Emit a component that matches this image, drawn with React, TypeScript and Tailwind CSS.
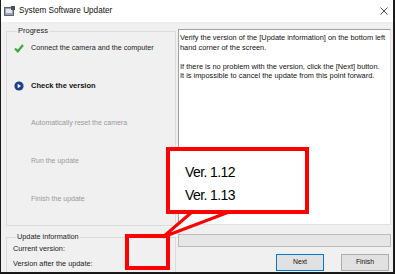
import React from 'react';

type StepState = 'done' | 'current' | 'todo';

const steps: { label: string; state: StepState }[] = [
    { label: 'Connect the camera and the computer', state: 'done' },
    { label: 'Check the version', state: 'current' },
    { label: 'Automatically reset the camera', state: 'todo' },
    { label: 'Run the update', state: 'todo' },
    { label: 'Finish the update', state: 'todo' },
];

const StepIcon: React.FC<{ state: StepState }> = ({ state }) => {
    if (state === 'done') {
        return (
            <svg width="10" height="10" viewBox="0 0 10 10">
                <path d="M1 5.5 L3.8 8.3 L9 2" fill="none" stroke="#3aa83a" strokeWidth="2.2" />
            </svg>
        );
    }
    if (state === 'current') {
        return (
            <svg width="10" height="10" viewBox="0 0 10 10">
                <circle cx="5" cy="5" r="4.6" fill="#1f3f8c" />
                <path d="M3.7 2.8 L7 5 L3.7 7.2 Z" fill="#fff" />
            </svg>
        );
    }
    return <span className="w-[10px]" />;
};

const App: React.FC = () => {
    return (
        <div className="relative w-[395px] h-[275px] bg-white font-['Liberation_Sans',Arial,sans-serif]">
            <div className="flex flex-col w-[395px] h-[274px] border-l border-r-2 border-b-2 border-[#1a1a1a]">
                {/* title bar */}
                <div className="flex items-center h-[22px] bg-white pl-[3px] pr-[5px]">
                    <svg width="11" height="11" viewBox="0 0 11 11" className="mr-[4px]">
                        <rect x="0.5" y="1.5" width="9" height="8" fill="#9aa3ad" stroke="#5a636b" />
                        <rect x="2" y="3" width="6" height="4" fill="#dfe5ea" />
                        <rect x="7" y="0" width="4" height="4" fill="#46505a" />
                    </svg>
                    <span className="text-[8.2px] text-[#111]">System Software Updater</span>
                    <svg width="8" height="8" viewBox="0 0 8 8" className="ml-auto">
                        <path d="M0.5 0.5 L7.5 7.5 M7.5 0.5 L0.5 7.5" stroke="#333" strokeWidth="0.9" />
                    </svg>
                </div>

                {/* body */}
                <div className="flex flex-1 bg-[#f0f0f0] overflow-hidden">
                    {/* left column */}
                    <div className="flex flex-col w-[170px] ml-[5px] pt-[4px]">
                        <fieldset className="h-[200px] shrink-0 border border-[#dcdcdc] px-[7px]">
                            <legend className="ml-[3px] px-[1px] text-[7.5px] leading-[10px] text-[#222]">Progress</legend>
                            <div className="flex flex-col -mt-[7px]">
                                {steps.map((s) => (
                                    <div key={s.label} className="flex items-center gap-[7px] h-[37.8px]">
                                        <StepIcon state={s.state} />
                                        <span
                                            className={
                                                s.state === 'current'
                                                    ? 'text-[7.5px] font-bold text-[#111]'
                                                    : s.state === 'done'
                                                    ? 'text-[7.2px] text-[#222]'
                                                    : 'text-[7px] text-[#9a9a9a]'
                                            }
                                        >
                                            {s.label}
                                        </span>
                                    </div>
                                ))}
                            </div>
                        </fieldset>
                        <fieldset className="mt-[6px] h-[60px] shrink-0 border border-[#dcdcdc] px-[6px]">
                            <legend className="ml-[3px] px-[1px] text-[7.3px] leading-[10px] text-[#222]">Update information</legend>
                            <div className="flex flex-col text-[7.3px] text-[#222] leading-[15px] -mt-[1px]">
                                <span>Current version:</span>
                                <span>Version after the update:</span>
                            </div>
                        </fieldset>
                    </div>

                    {/* right column */}
                    <div className="flex flex-col w-[213px] ml-[2px] pt-[7px]">
                        <div className="h-[196px] shrink-0 bg-white border border-[#a0a0a0] border-b-[#e0e0e0] border-r-[#e0e0e0] px-[1px] pt-[3px] text-[7.4px] leading-[9.5px] text-[#111]">
                            <p>Verify the version of the [Update information] on the bottom left hand corner of the screen.</p>
                            <p className="mt-[9.5px]">If there is no problem with the version, click the [Next] button.</p>
                            <p>It is impossible to cancel the update from this point forward.</p>
                        </div>
                        <div className="mt-[9px] h-[13px] shrink-0 bg-[#e6e6e6] border border-[#bcbcbc]" />
                        <div className="flex justify-end gap-[17px] mt-[7px] pr-[2px]">
                            <button className="w-[48px] h-[17px] bg-[#e1e1e1] border border-[#0078d7] text-[6.8px] text-[#111]">Next</button>
                            <button className="w-[48px] h-[17px] bg-[#e1e1e1] border border-[#adadad] text-[6.8px] text-[#111]">Finish</button>
                        </div>
                    </div>
                </div>
            </div>

            {/* callout overlay */}
            <svg width="395" height="275" className="absolute left-0 top-0 pointer-events-none">
                <polygon points="192,212 163,237 229,212" fill="#fff" stroke="#ff0000" strokeWidth="3" strokeLinejoin="miter" />
            </svg>
            <div className="absolute left-[166px] top-[147px] w-[143px] h-[67px] bg-white border-4 border-[#ff0000] pl-[15px] pt-[10px] flex flex-col text-[14px] leading-[23px] tracking-[-0.6px] text-black">
                <span>Ver. 1.12</span>
                <span>Ver. 1.13</span>
            </div>
            <div className="absolute left-[125px] top-[234px] w-[45px] h-[36px] border-4 border-[#ff0000]" />
        </div>
    );
};

export default App;
